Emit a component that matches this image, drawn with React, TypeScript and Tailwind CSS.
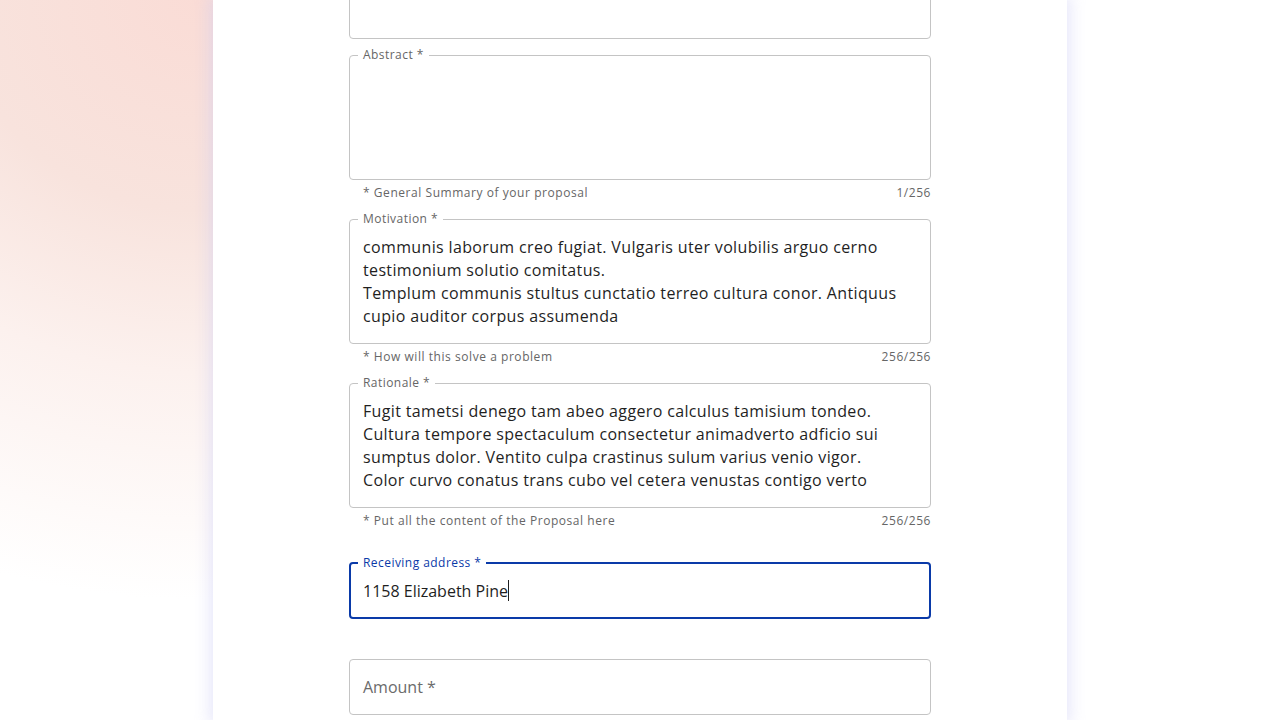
import React from "react";

const FONT = "font-['Open_Sans','Noto_Sans',sans-serif]";

function Notched({
  label,
  focused = false,
  children,
  height,
}: {
  label?: string;
  focused?: boolean;
  children?: React.ReactNode;
  height: string;
}) {
  return (
    <div
      className={`relative rounded-[4px] ${height} ${
        focused ? "border-2 border-[#0a3aa8]" : "border border-[#c4c4c4]"
      }`}
    >
      {label && (
        <span
          className={`absolute bg-white px-[5px] text-[12px] leading-[16px] tracking-[0.45px] whitespace-nowrap ${
            focused ? "left-[7px] -top-[9px] text-[#0a3aa8]" : "left-[8px] -top-[9px] text-[#666666]"
          }`}
        >
          {label}
        </span>
      )}
      {children}
    </div>
  );
}

function Helper({ left, right }: { left: string; right?: string }) {
  return (
    <div className="mt-[3px] flex h-[20px] items-center justify-between pl-[14px] text-[12px] leading-[20px] tracking-[0.55px] text-[#666666]">
      <span>{left}</span>
      {right && <span>{right}</span>}
    </div>
  );
}

function Lines({ lines }: { lines: string[] }) {
  return (
    <div className="overflow-hidden px-[13px] pt-[16px] text-[16px] leading-[23px] tracking-[0.35px] text-[#1f1f1f]">
      {lines.map((l, i) => (
        <div key={i} className="whitespace-nowrap">
          {l}
        </div>
      ))}
    </div>
  );
}

export default function App() {
  return (
    <div
      className={`${FONT} h-[720px] w-[1280px] overflow-hidden bg-[radial-gradient(ellipse_680px_600px_at_200px_0px,#fadcd6_0%,#f8e3dd_35%,#fcf1ee_62%,#ffffff_100%)]`}
    >
      <div className="mx-auto flex h-[720px] w-[854px] flex-col bg-white shadow-[0_0_14px_4px_rgba(205,205,245,0.45)]">
        <div className="mx-auto flex w-[582px] flex-col">
          <div className="-mt-[17px]">
            <Notched height="h-[56px]" />
          </div>

          <div className="mt-[16px]">
            <Notched label="Abstract *" height="h-[125px]" />
            <Helper left="* General Summary of your proposal" right="1/256" />
          </div>

          <div className="mt-[16px]">
            <Notched label="Motivation *" height="h-[125px]">
              <Lines
                lines={[
                  "communis laborum creo fugiat. Vulgaris uter volubilis arguo cerno",
                  "testimonium solutio comitatus.",
                  "Templum communis stultus cunctatio terreo cultura conor. Antiquus",
                  "cupio auditor corpus assumenda",
                ]}
              />
            </Notched>
            <Helper left="* How will this solve a problem" right="256/256" />
          </div>

          <div className="mt-[16px]">
            <Notched label="Rationale *" height="h-[125px]">
              <Lines
                lines={[
                  "Fugit tametsi denego tam abeo aggero calculus tamisium tondeo.",
                  "Cultura tempore spectaculum consectetur animadverto adficio sui",
                  "sumptus dolor. Ventito culpa crastinus sulum varius venio vigor.",
                  "Color curvo conatus trans cubo vel cetera venustas contigo verto",
                ]}
              />
            </Notched>
            <Helper left="* Put all the content of the Proposal here" right="256/256" />
          </div>

          <div className="mt-[31px]">
            <Notched label="Receiving address *" focused height="h-[57px]">
              <div className="flex h-full items-center px-[12px] text-[16px] text-[#1f1f1f]">
                <span>1158 Elizabeth Pine</span>
                <span className="inline-block h-[21px] w-[1px] bg-[#1f1f1f]" />
              </div>
            </Notched>
            <div className="h-[23px]" />
          </div>

          <div className="mt-[17px]">
            <Notched height="h-[56px]">
              <div className="flex h-full items-center px-[13px] text-[16px] text-[#6b6b6b]">
                Amount *
              </div>
            </Notched>
          </div>
        </div>
      </div>
    </div>
  );
}
